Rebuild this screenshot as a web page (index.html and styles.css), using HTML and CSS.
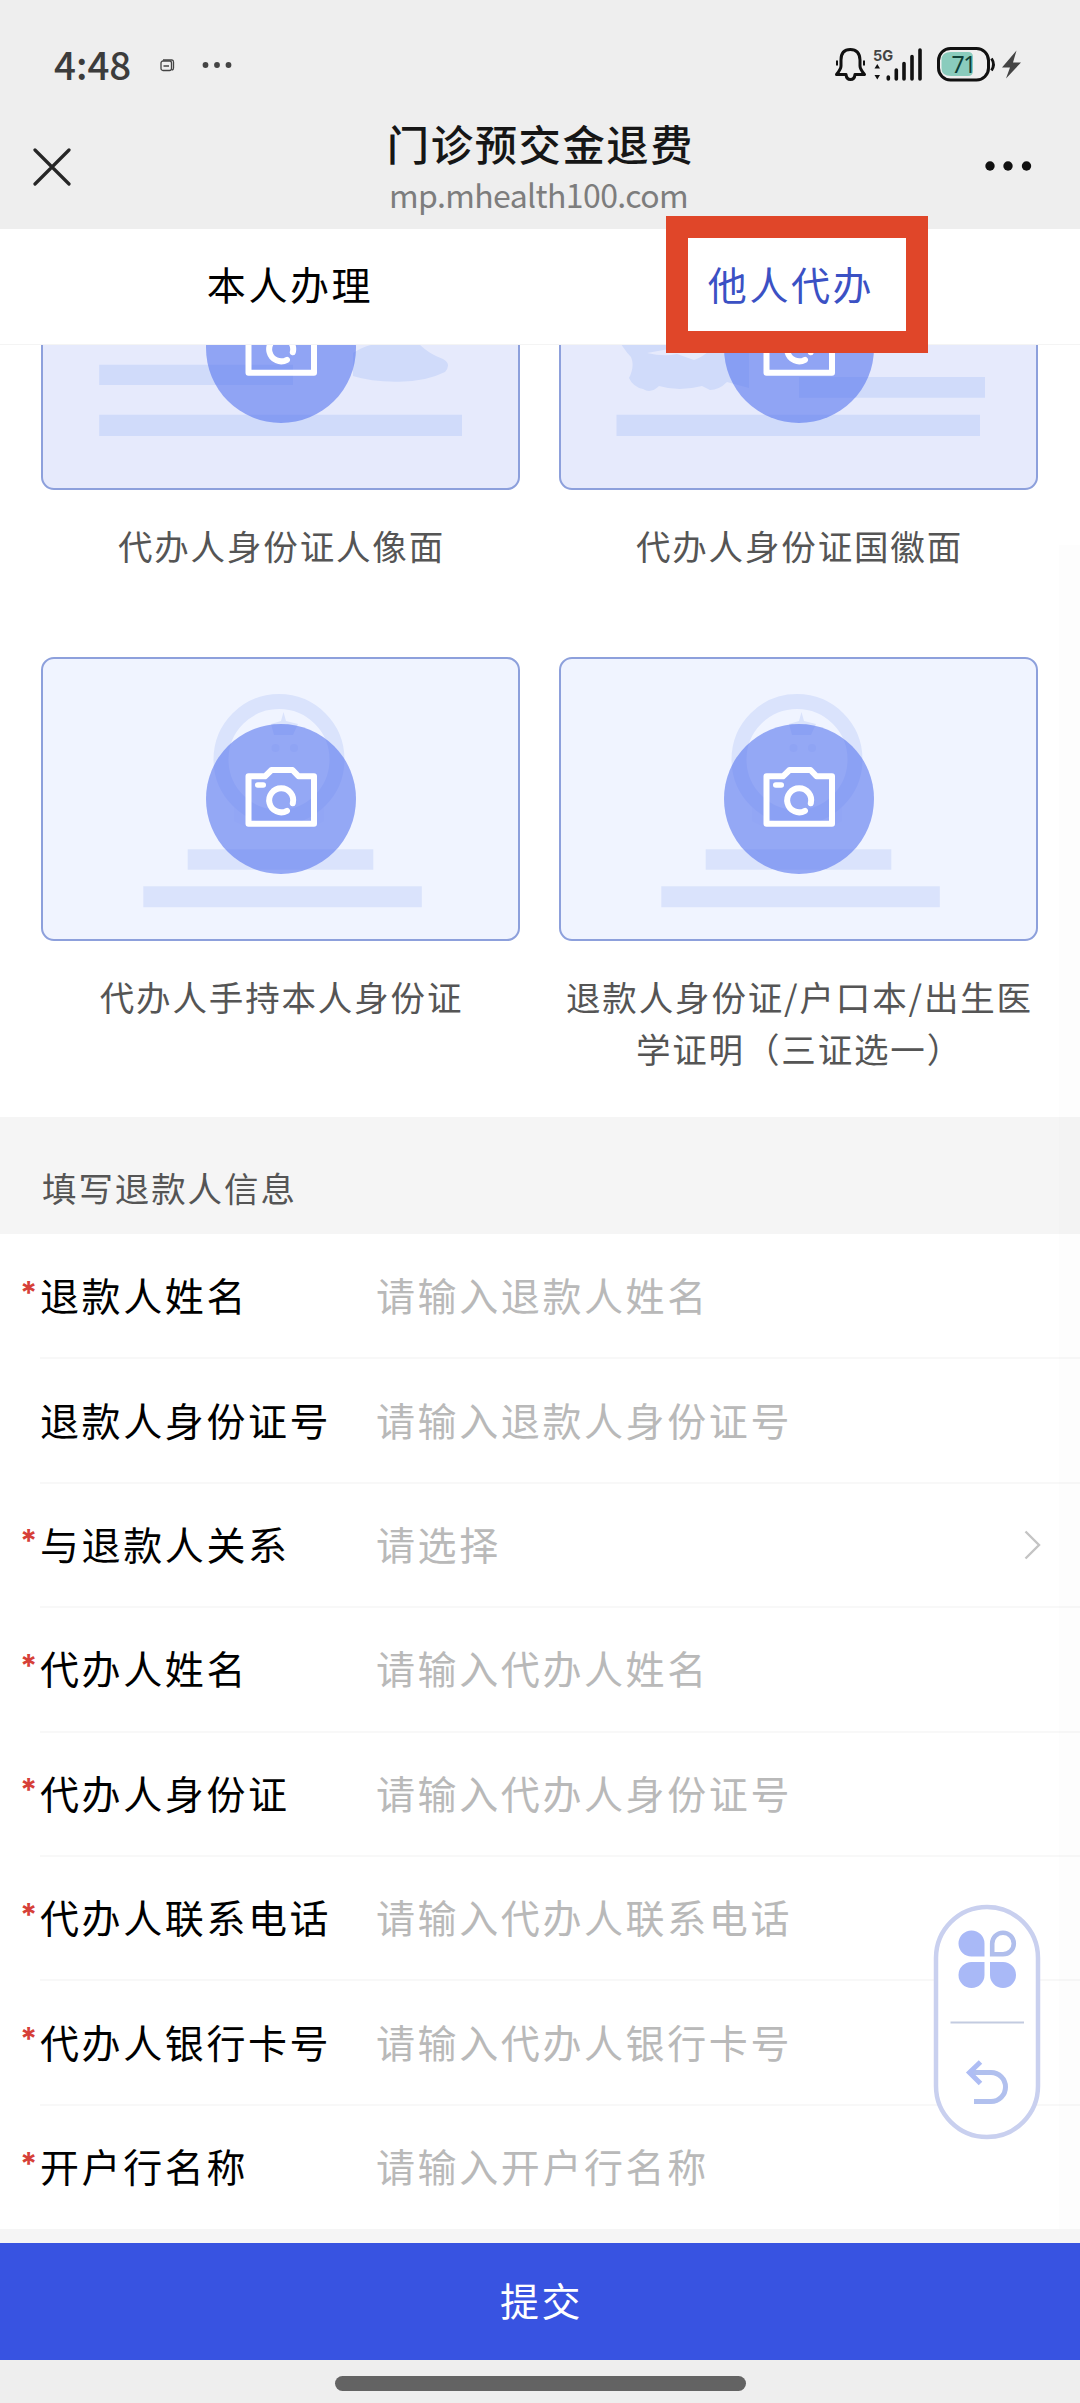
FILE: index.html
```html
<!DOCTYPE html>
<html lang="zh-CN">
<head>
<meta charset="utf-8">
<title>门诊预交金退费</title>
<link rel="stylesheet" href="styles.css">
</head>
<body>
<svg class="defs" width="0" height="0">
  <symbol id="camera" viewBox="0 0 150 150">
    <circle cx="75" cy="75" r="75" fill="#5674ee" fill-opacity=".6"/>
    <g fill="none" stroke="#fff" stroke-width="6" stroke-linejoin="round" stroke-linecap="round">
      <path d="M42.500 52.300H59L65.500 46H86.500L92.500 52.300H108V99.700H42.500Z"/>
      <path d="M51.800 61H57.200" stroke-width="5.600"/>
      <path d="M86.800 79.300A12 12 0 1 0 81 86.800"/>
    </g>
  </symbol>
  <symbol id="emblem" viewBox="2 2 475 280">
    <g fill="#dae3fc">
      <path d="M180 131L193 141V164L210 172H268L283 164V141L296 131V110H180Z" fill-opacity=".25"/>
      <circle cx="238" cy="102.500" r="58" fill="#f0f4ff" stroke="#dae3fc" stroke-width="15"/>
      <path d="M242.500 55L245 64L257 67L252 78H233L230 67L240 64Z"/>
      <circle cx="234.500" cy="91" r="4" fill-opacity=".6"/><circle cx="253" cy="91" r="4" fill-opacity=".6"/>
      <path d="M146.700 192.300H332.300V212.700H146.700ZM102.300 229.300H380.800V250.300H102.300Z"/>
    </g>
  </symbol>
</svg>
<div class="screen">
  <header class="header">
    <div class="status">
      <div class="status-left">
        <span class="clock">4:48</span>
        <svg class="note" width="15" height="13" viewBox="0 0 15 13" fill="none" stroke="#444" stroke-width="1.300"><rect x="1" y="2" width="10.500" height="9.500" rx="2"/><path d="M3 1H12Q13.500 1 13.500 3V9Q13.500 11 12 11M3.500 7H9"/></svg>
        <svg width="30" height="8" viewBox="0 0 30 8" fill="#444"><circle cx="3.500" cy="4" r="2.900"/><circle cx="15" cy="4" r="2.900"/><circle cx="26.500" cy="4" r="2.900"/></svg>
      </div>
      <svg class="status-right" width="190" height="38" viewBox="834 45 190 38">
        <path d="M841 66V60Q841 49.500 850.300 49.500T860 60V66Q860 69 864.500 74.500H855Q854.500 79.500 850.500 79.500T846 74.500H836.500Q841 69 841 66Z" fill="none" stroke="#111" stroke-width="3" stroke-linejoin="round"/>
        <path d="M837 60.500V65.500M864 60.500V65.500" stroke="#111" stroke-width="2"/>
        <text class="net" x="873" y="60.500">5G</text>
        <path d="M877.300 64L880 68.500H874.500ZM877.300 79.500L880 75H874.500Z" fill="#111"/>
        <path d="M888.300 77V79M896.300 70V79M904 63.500V79M912 56.500V79M920 50V79" stroke="#111" stroke-width="3.600" stroke-linecap="round"/>
        <rect x="938.500" y="48.500" width="50" height="31.500" rx="12" fill="none" stroke="#111" stroke-width="3"/>
        <path d="M951 52H968Q973 52 973 57V71Q973 76 968 76H951Q941.500 76 941.500 68V60Q941.500 52 951 52Z" fill="#8accbd"/>
        <path d="M991.500 58.500Q995.500 64.500 991.500 70.500" fill="none" stroke="#111" stroke-width="2.800"/>
        <text class="level" x="951.500" y="73">71</text>
        <path d="M1016.500 50.500L1002 67.500H1010L1006 78.500L1021 62.500H1013Z" fill="#444"/>
      </svg>
    </div>
    <div class="nav">
      <svg class="close" width="38" height="38" viewBox="0 0 38 38" stroke="#262626" stroke-width="3.200" stroke-linecap="round"><path d="M2 2L36 36M36 2L2 36"/></svg>
      <div class="heading"><h1>门诊预交金退费</h1><p>mp.mhealth100.com</p></div>
      <svg class="more" width="48" height="12" viewBox="0 0 48 12" fill="#111"><circle cx="6" cy="6" r="4.700"/><circle cx="24" cy="6" r="4.700"/><circle cx="42.500" cy="6" r="4.700"/></svg>
    </div>
  </header>

  <nav class="tabs">
    <span class="tab">本人办理</span>
    <span class="tab active">他人代办<i class="marker"></i></span>
  </nav>

  <main class="content">
    <section class="uploads">
      <figure>
        <div class="card solid">
          <svg class="art" viewBox="2 2 475 280" fill="#d0dbfa"><path d="M58.200 158.700H252V179H58.200ZM58.200 208.700H421V230H58.200ZM312 147Q326 138 338 138H378Q388 148 402 153Q411 158 404 166Q384 176 357 175.700Q330 176 312 170Z"/></svg>
          <svg class="camera"><use href="#camera"/></svg>
        </div>
        <figcaption>代办人身份证人像面</figcaption>
      </figure>
      <figure>
        <div class="card solid">
          <svg class="art" viewBox="2 2 475 280" fill="#d0dbfa"><path d="M62 138H190V182L168 176Q160 184 151 184L143 180Q120 186 100 180Q92 188 84 183Q74 181 70 172Q76 160 72 151Q68 147 64 141Z"/><path d="M88 147Q105 151 118 148L135 154Q144 151 151 144L132 143Q124 150 110 143Z" fill="#e6eafc"/><path d="M240 171H426V191.700H240ZM57.500 208.700H421V230H57.500Z"/></svg>
          <svg class="camera"><use href="#camera"/></svg>
        </div>
        <figcaption>代办人身份证国徽面</figcaption>
      </figure>
      <figure>
        <div class="card">
          <svg class="art"><use href="#emblem"/></svg>
          <svg class="camera"><use href="#camera"/></svg>
        </div>
        <figcaption>代办人手持本人身份证</figcaption>
      </figure>
      <figure>
        <div class="card">
          <svg class="art"><use href="#emblem"/></svg>
          <svg class="camera"><use href="#camera"/></svg>
        </div>
        <figcaption>退款人身份证/户口本/出生医<br>学证明（三证选一）</figcaption>
      </figure>
    </section>

    <h2 class="section-title">填写退款人信息</h2>
    <ul class="form">
      <li><b>*</b><label>退款人姓名</label><span>请输入退款人姓名</span></li>
      <li><label>退款人身份证号</label><span>请输入退款人身份证号</span></li>
      <li><b>*</b><label>与退款人关系</label><span>请选择</span><svg class="chevron" width="17" height="30" viewBox="0 0 17 30" fill="none" stroke="#c4c4c4" stroke-width="2.400"><path d="M1.500 1.500L15 15L1.500 28.500"/></svg></li>
      <li><b>*</b><label>代办人姓名</label><span>请输入代办人姓名</span></li>
      <li><b>*</b><label>代办人身份证</label><span>请输入代办人身份证号</span></li>
      <li><b>*</b><label>代办人联系电话</label><span>请输入代办人联系电话</span></li>
      <li><b>*</b><label>代办人银行卡号</label><span>请输入代办人银行卡号</span></li>
      <li><b>*</b><label>开户行名称</label><span>请输入开户行名称</span></li>
    </ul>
  </main>

  <button class="submit">提交</button>
  <footer class="home"><i></i></footer>

  <div class="scroll-track"></div>
  <svg class="floating" width="108" height="236" viewBox="0 0 108 236">
    <rect x="3" y="3" width="102" height="230" rx="51" fill="#fff" stroke="#c9d0ef" stroke-width="4.500"/>
    <g fill="#a9b9f7">
      <path d="M51.500 52.500H38.500A13 13 0 1 1 51.500 39.500ZM51.500 58V71A13 13 0 1 1 38.500 58ZM57 58H70A13 13 0 1 1 57 71Z"/>
      <path d="M59.200 50.300V39.500A10.800 10.800 0 1 1 70 50.300Z" fill="none" stroke="#b0beec" stroke-width="4.600"/>
    </g>
    <path d="M17.500 118.500H91" stroke="#c3cbe0" stroke-width="2"/>
    <path d="M41 197.500H58A14.500 14.500 0 0 0 58 168.500H36" fill="none" stroke="#b1c0ee" stroke-width="5"/>
    <path d="M47.500 158L36.500 168.500L47.500 179.500" fill="none" stroke="#aebdf4" stroke-width="5"/>
  </svg>
</div>
</body>
</html>
```
FILE: styles.css
```css
* { box-sizing: border-box; margin: 0; padding: 0; }
body { width: 1080px; background: #fff; font-family: "Noto Sans CJK SC", sans-serif; }
.defs { position: absolute; }
.screen { position: relative; display: flex; flex-direction: column; height: 2403px; overflow: hidden; }
svg { display: block; flex: none; }

.header { height: 229px; background: #eee; padding-top: 44px; }
.status { display: flex; justify-content: space-between; height: 42px; padding: 0 56px 0 54px; }
.status-left { display: flex; align-items: center; }
.clock { width: 106px; margin-top: -5px; font: 500 38.500px/42px "Noto Sans CJK SC", sans-serif; color: #3c3c3c; }
.note { margin-right: 27px; }
.status-right { margin-top: 1px; }
.net { font: 700 14.500px Inter, sans-serif; fill: #444; }
.level { font: 400 23px "Noto Sans", sans-serif; fill: #0f4038; letter-spacing: -1.500px; }

.nav { display: flex; justify-content: space-between; padding: 0 48px 0 33px; }
.close { margin-top: 62px; }
.more { margin-top: 74px; }
.heading { text-align: center; padding: 29px 0 0 26px; }
.heading h1 { font-size: 42.300px; line-height: 56px; font-weight: 500; letter-spacing: 1.600px; color: #161616; }
.heading p { margin: 1px 4px 0 0; font-size: 32px; line-height: 44px; letter-spacing: -.600px; color: #7d7d7d; }

.tabs { display: flex; height: 116px; padding: 0 39px 0 40px; border-bottom: 1px solid #f4f4f4; background: #fff; }
.tab { position: relative; flex: 1; text-align: center; font-size: 39px; line-height: 108px; letter-spacing: 2.600px; color: #000; }
.tab.active { color: #3b51c4; padding-left: 1px; }
.marker { position: absolute; z-index: 2; left: 125.500px; top: -13px; width: 262px; height: 137px; border: 22px solid #e04629; }

.content { height: 1898px; overflow: hidden; background: #f5f5f5; }
.uploads { display: grid; grid-template-columns: 479px 479px; align-content: start; column-gap: 39px; row-gap: 84px; height: 911px; margin-top: -139px; padding: 0 41px; background: #fff; }
.card { display: grid; place-items: center; height: 284px; border: 2px solid #8da0dc; border-radius: 13px; background: #f0f4ff; overflow: hidden; }
.card.solid { background: #e6eafc; }
.card > svg { grid-area: 1 / 1; }
.art { width: 475px; height: 280px; }
.camera { width: 150px; height: 150px; }
figcaption { margin: 29px 0 2px 2px; text-align: center; white-space: nowrap; font-size: 34.500px; line-height: 52px; letter-spacing: 1.850px; color: #555; }

.section-title { height: 117px; padding: 44px 0 0 42px; font-size: 34.500px; line-height: 52px; font-weight: 400; letter-spacing: 1.900px; color: #555; background: #f5f5f5; }
.form { list-style: none; background: #fff; padding: 1px 0 0 40px; }
.form li { display: flex; align-items: center; height: 124.400px; padding-bottom: 4px; border-bottom: 2px solid #f8f8f8; font-size: 39px; letter-spacing: 2.600px; }
.form li:last-child { height: 123.200px; border: 0; }
.form b { width: 20px; margin: -3px 0 0 -20px; font: 700 31px/40px Inter, sans-serif; color: #d64038; letter-spacing: 0; }
.form label { width: 336px; color: #000; }
.form span { color: #b9b9b9; }
.chevron { margin: 4px 39px 0 auto; }

.submit { height: 117px; padding: 0 0 6px 3px; border: 0; background: #3853e1; color: #fff; font: 400 39px "Noto Sans CJK SC", sans-serif; letter-spacing: 2.600px; }
.home { flex: 1; background: #eee; padding-top: 16px; }
.home i { display: block; width: 411px; height: 15px; margin: 0 auto; border-radius: 8px; background: #636363; }

.scroll-track { position: absolute; right: 0; top: 545px; width: 21px; height: 1684px; background: rgba(0,0,0,.008); }
.floating { position: absolute; left: 933px; top: 1904px; }
```
